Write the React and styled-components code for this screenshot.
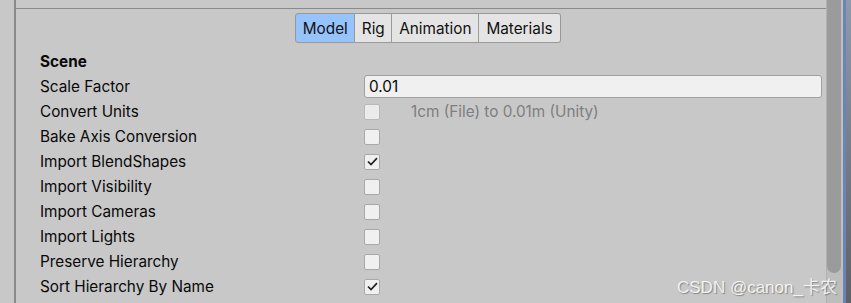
import React from 'react';
import styled, { createGlobalStyle } from 'styled-components';

const GlobalStyle = createGlobalStyle`
  html, body {
    margin: 0;
    padding: 0;
    background: #c8c8c8;
  }
  body {
    font-family: Inter, "Noto Sans", sans-serif;
    color: #090909;
  }
`;

// Layout
const Window = styled.div`
  position: relative;
  display: flex;
  width: 851px;
  height: 303px;
  overflow: hidden;
  background: #c8c8c8;
`;

const Gutter = styled.div`
  width: 14px;
  flex-shrink: 0;
`;

const Inspector = styled.div`
  flex: 1;
  display: flex;
  flex-direction: column;
  border-left: 2px solid #8a8a8a;
  min-width: 0;
`;

const TopStrip = styled.div`
  height: 8px;
  border-bottom: 1px solid #8a8a8a;
`;

const TabBar = styled.div`
  display: flex;
  justify-content: center;
  padding: 4px 0 0 14px;
`;

const Tab = styled.div`
  height: 28px;
  padding: 0 ${(p) => p.$pad}px;
  display: flex;
  align-items: center;
  font-size: 15.3px;
  color: #111;
  background: ${(p) => (p.$active ? '#96c3fb' : '#e4e4e4')};
  border: 1px solid #999;
  border-left-width: ${(p) => (p.$first ? 1 : 0)}px;
  border-radius: ${(p) => (p.$first ? '3px 0 0 3px' : p.$last ? '0 3px 3px 0' : '0')};
`;

const Content = styled.div`
  padding: 7px 4px 0 24px;
  display: flex;
  flex-direction: column;
`;

const Heading = styled.div`
  height: 24px;
  line-height: 24px;
  font-size: 15.3px;
  font-weight: 700;
`;

const Row = styled.div`
  display: grid;
  grid-template-columns: 324px 1fr;
  align-items: center;
  height: 25px;
  font-size: 15.3px;
`;

const Label = styled.div`
  white-space: nowrap;
`;

const Field = styled.div`
  height: 21px;
  line-height: 21px;
  padding: 0 4px;
  background: #f0f0f0;
  border: 1px solid #a0a0a0;
  border-radius: 3px;
`;

const Control = styled.div`
  display: flex;
  align-items: center;
  gap: 31px;
`;

const Box = styled.div`
  width: 16px;
  height: 16px;
  box-sizing: border-box;
  background: ${(p) => (p.$disabled ? '#ebebeb' : '#f0f0f0')};
  border: 1px solid ${(p) => (p.$disabled ? '#bababa' : '#a8a8a8')};
  border-radius: 2px;
  display: flex;
  align-items: center;
  justify-content: center;
`;

const Hint = styled.span`
  color: #7e7e7e;
`;

const Scrollbar = styled.div`
  width: 14px;
  flex-shrink: 0;
  border-left: 1px solid #b2b2b2;
  background: #bdbdbd;
`;

const Thumb = styled.div`
  height: 273px;
  background: #9b9b9b;
  border-radius: 0 0 7px 7px;
`;

const Edge = styled.div`
  width: 8px;
  flex-shrink: 0;
  display: flex;
  border-left: 2px solid #c0c0c0;
`;

const EdgeBlue = styled.div`
  width: 3px;
  background: #6984b5;
`;

const EdgeScene = styled.div`
  flex: 1;
  background: linear-gradient(#8e9aad, #5e6166);
`;

const Watermark = styled.div`
  position: absolute;
  left: 677px;
  top: 273px;
  font-family: "Liberation Sans", "Noto Sans CJK SC", sans-serif;
  font-size: 17px;
  color: rgba(255, 255, 255, 0.85);
  text-shadow: 1px 1px 1px rgba(90, 90, 90, 0.6);
  white-space: nowrap;
`;

const Check = () => (
  <svg width="11" height="9" viewBox="0 0 11 9">
    <path d="M1 4.5 L4 7.5 L10 1.2" fill="none" stroke="#222" strokeWidth="1.7" />
  </svg>
);

const tabs = [
  { name: 'Model', pad: 6.5, active: true },
  { name: 'Rig', pad: 6.5 },
  { name: 'Animation', pad: 7 },
  { name: 'Materials', pad: 7 },
];

const toggles = [
  { label: 'Convert Units', disabled: true, hint: '1cm (File) to 0.01m (Unity)' },
  { label: 'Bake Axis Conversion' },
  { label: 'Import BlendShapes', checked: true },
  { label: 'Import Visibility' },
  { label: 'Import Cameras' },
  { label: 'Import Lights' },
  { label: 'Preserve Hierarchy' },
  { label: 'Sort Hierarchy By Name', checked: true },
];

const App = () => {
  return (
    <Window>
      <GlobalStyle />
      <Gutter />
      <Inspector>
        <TopStrip />
        <TabBar>
          {tabs.map((t, i) => (
            <Tab
              key={t.name}
              $pad={t.pad}
              $active={t.active}
              $first={i === 0}
              $last={i === tabs.length - 1}
            >
              {t.name}
            </Tab>
          ))}
        </TabBar>
        <Content>
          <Heading>Scene</Heading>
          <Row>
            <Label>Scale Factor</Label>
            <Field>0.01</Field>
          </Row>
          {toggles.map((t) => (
            <Row key={t.label}>
              <Label>{t.label}</Label>
              <Control>
                <Box $disabled={t.disabled}>{t.checked && <Check />}</Box>
                {t.hint && <Hint>{t.hint}</Hint>}
              </Control>
            </Row>
          ))}
        </Content>
      </Inspector>
      <Scrollbar>
        <Thumb />
      </Scrollbar>
      <Edge>
        <EdgeBlue />
        <EdgeScene />
      </Edge>
      <Watermark>CSDN @canon_卡农</Watermark>
    </Window>
  );
};

export default App;
